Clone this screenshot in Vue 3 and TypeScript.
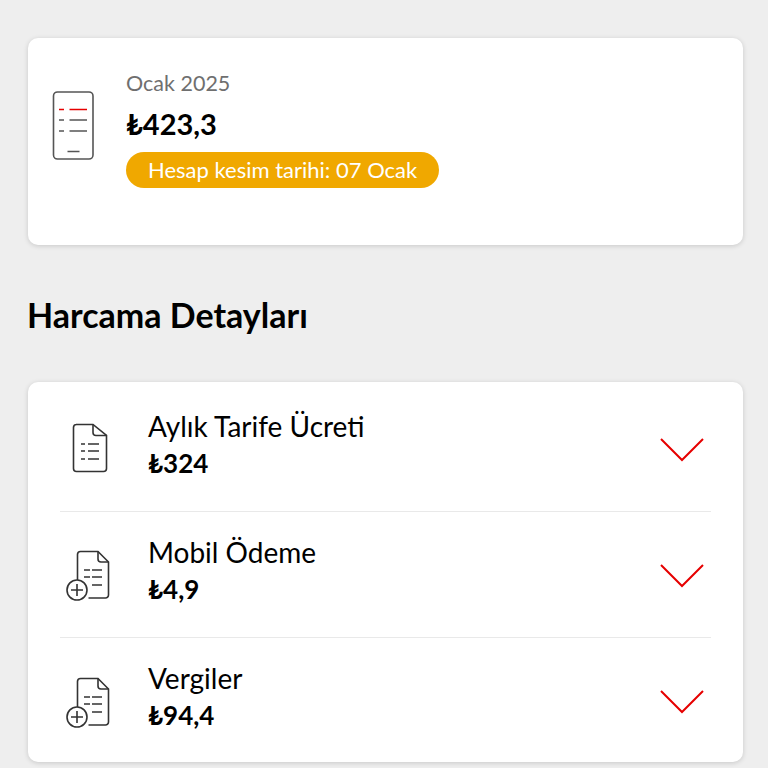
<template>
  <div class="page">
    <section class="card bill">
      <svg class="phone-icon" width="44" height="72" viewBox="0 0 44 72" fill="none" stroke="#555" stroke-width="1.6">
        <rect x="2.500" y="2" width="39.500" height="67" rx="4" />
        <path d="M8 19.500h5M18.500 19.500h17.500" stroke="#e60000" />
        <path d="M8 30h5M18.500 30h17.500M8 41h5M18.500 41h17.500M16.500 61.500h12" />
      </svg>
      <div class="bill-info">
        <div class="month">Ocak 2025</div>
        <div class="total">₺423,3</div>
        <div class="badge">Hesap kesim tarihi: 07 Ocak</div>
      </div>
    </section>

    <h2 class="heading">Harcama Detayları</h2>

    <section class="card details">
      <div v-for="item in items" :key="item.title" class="row">
        <div class="row-icon">
          <svg v-if="!item.plus" width="48" height="52" viewBox="0 0 48 52" fill="none" stroke="#333" stroke-width="1.6">
            <path d="M16 3.500h17l13.500 11v33a3 3 0 0 1-3 3h-27a3 3 0 0 1-3-3v-41a3 3 0 0 1 3-3z" />
            <path d="M33 3.500v8a3 3 0 0 0 3 3h10.500" />
            <path d="M21 23h4M28 23h11M21 30h4M28 30h11M21 38h4M28 38h11" />
          </svg>
          <svg v-else width="50" height="56" viewBox="0 0 50 56" fill="none" stroke="#333" stroke-width="1.6">
            <path d="M17.500 35v-25.500a3 3 0 0 1 3-3h17.500l10.500 10.500v33a3 3 0 0 1-3 3h-17" />
            <path d="M38 6.500v7.500a3 3 0 0 0 3 3h7.500" />
            <path d="M24 25h6M32 25h10M24 32h6M32 32h10M32 40h10" />
            <circle cx="17" cy="45" r="10" />
            <path d="M17 39v12M11 45h12" />
          </svg>
        </div>
        <div class="row-text">
          <div class="row-title">{{ item.title }}</div>
          <div class="row-price">{{ item.price }}</div>
        </div>
        <svg class="chevron" width="44" height="26" viewBox="0 0 44 26" fill="none" stroke="#e60000" stroke-width="2">
          <path d="M1 2l21 21L43 2" />
        </svg>
      </div>
    </section>
  </div>
</template>

<script setup lang="ts">
const items = [
  { title: 'Aylık Tarife Ücreti', price: '₺324', plus: false },
  { title: 'Mobil Ödeme', price: '₺4,9', plus: true },
  { title: 'Vergiler', price: '₺94,4', plus: true },
]
</script>

<style>
html,
body {
  background: #eeeeee;
}
</style>

<style scoped>
.page {
  box-sizing: border-box;
  height: 768px;
  overflow: hidden;
  padding: 38px 25px 0 28px;
  background: #eeeeee;
  font-family: Lato, 'Open Sans', sans-serif;
  color: #000;
}

.card {
  background: #fff;
  border-radius: 10px;
  box-shadow: 0 1px 5px rgba(0, 0, 0, 0.16);
}

.bill {
  height: 207px;
  box-sizing: border-box;
  display: flex;
  align-items: flex-start;
  padding: 28px 0 0 23px;
}

.phone-icon {
  margin-top: 24px;
  flex-shrink: 0;
}

.bill-info {
  margin-left: 31px;
}

.month {
  font-size: 21.500px;
  line-height: 34px;
  color: #6f6f6f;
}

.total {
  font-size: 29px;
  font-weight: 700;
  line-height: 38px;
  margin-top: 5px;
}

.badge {
  display: inline-block;
  margin-top: 9px;
  padding: 0 22px;
  height: 36px;
  line-height: 36px;
  border-radius: 18px;
  background: #f0a800;
  color: #fff;
  font-size: 22px;
  white-space: nowrap;
}

.heading {
  margin: 52px 0 49px -1px;
  font-size: 34px;
  line-height: 36px;
  font-weight: 700;
}

.details {
  height: 380px;
  box-sizing: border-box;
  padding: 4px 32px 0;
}

.row {
  height: 126px;
  box-sizing: border-box;
  display: flex;
  align-items: center;
  border-bottom: 1px solid #e9e9e9;
}

.row:last-child {
  border-bottom: 0;
}

.row-icon {
  width: 88px;
  flex-shrink: 0;
}

.row-text {
  flex: 1;
  padding-bottom: 10px;
}

.row-title {
  font-size: 28px;
  line-height: 38px;
}

.row-price {
  font-size: 26px;
  font-weight: 700;
  line-height: 36px;
}

.chevron {
  margin: 2px 7px 0 0;
}
</style>
